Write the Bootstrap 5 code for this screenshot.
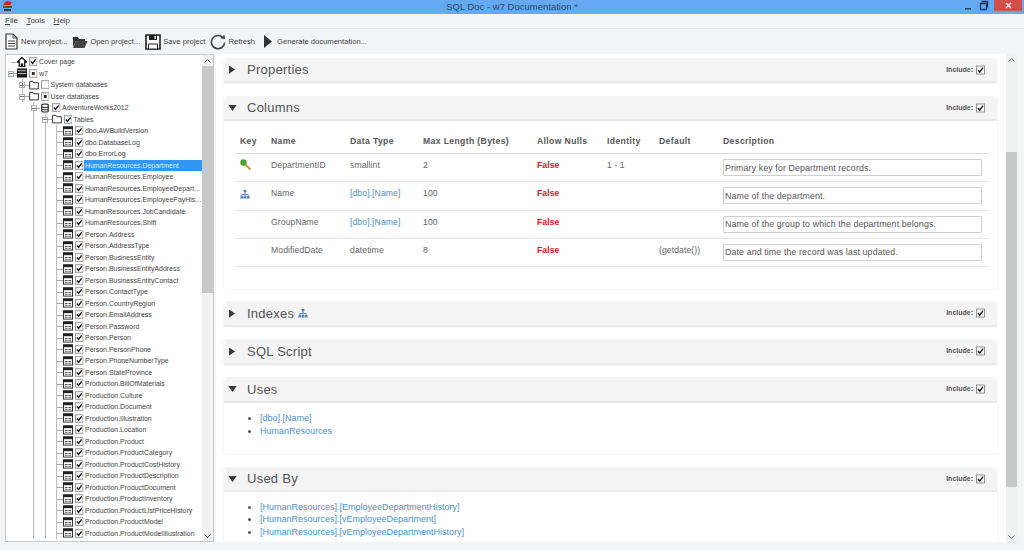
<!DOCTYPE html>
<html lang="en">
<head>
<meta charset="utf-8">
<title>SQL Doc - w7 Documentation *</title>
<link rel="stylesheet" href="https://cdn.jsdelivr.net/npm/bootstrap@5.3.0/dist/css/bootstrap.min.css">
<style>
html,body{height:100%;overflow:hidden}
body{background:#f3f4f6;font-family:"Liberation Sans",Arial,sans-serif;color:#555;width:1024px;height:550px}
.app-shell{height:550px}
.title-bar{height:14px;background:#64a9f1;color:#33465c;font-size:9.5px;line-height:14px;padding-left:2px}
.title-text{left:0;right:0;top:0}
.win-ctrl{width:12px;height:11px;color:#1d3a5c}
.win-close{width:28px;height:11px;background:#d0514b;margin:0 2px 0 4px}
.menu-bar{height:14px;font-size:8px;color:#444;padding-left:5px;gap:8.5px;border-bottom:1px solid #e2e4e7;box-sizing:content-box}
.menu-bar u{text-decoration-thickness:1px}
.tool-bar{height:25px;font-size:7.6px;color:#444;padding-left:5px}
.tool-item{gap:2px;margin-right:5px}
.tool-item:last-child{margin-left:4px;gap:5px}
.main-area{height:488px;gap:2px;padding-left:5px}
.tree-panel{width:209px;background:#fff;border:1px solid #c9cbce;overflow:hidden}
.tree-view{flex:1;overflow:hidden;font-size:6.95px;color:#444;line-height:11.5px;padding:1px 0 0 4px}
.tree-view ul{list-style:none;margin:0;padding:0;border-left:1px solid transparent}
.tree-view ul ul{margin-left:10.5px;border-left:1px solid #b9bbbd}
.tree-view ul.lvl-one{border-left-color:transparent}
.nd{height:11.5px;display:flex;align-items:center;white-space:nowrap;padding-left:6px;position:relative}
.nd-line{box-shadow:-1px 0 0 #b9bbbd}
.nd::before{content:"";position:absolute;left:0;top:5.5px;width:6px;border-top:1px solid #a5a7aa}
.nd svg{flex:none}
.ic{width:10px;height:10px;margin-right:2px;color:#1b1b1b}
.ck{width:8.5px;height:9px;margin-right:1.5px}
.xp{position:absolute;left:-3.5px;top:3px;width:6px;height:6px;border:1px solid #a9abad;z-index:1;background:linear-gradient(#777,#777) center/4px 1px no-repeat #fff}
.xp-plus{background:linear-gradient(#777,#777) center/4px 1px no-repeat,linear-gradient(#777,#777) center/1px 4px no-repeat,#fff}
.nd-sel span{background:#3297f3;color:#dcecff;width:118px;padding-left:1px;margin-left:-1px}
.sb-track{width:11px;background:#f1f1f1;flex:none;color:#666;font-size:0}
.sb-arrow{height:11px}
.sb-thumb{background:#c8c8c8}
.tree-thumb{height:227px}
.doc-panel{flex:1;background:#fff;overflow:hidden;margin-right:7px}
.doc-scroll{flex:1;overflow:hidden;padding:4.5px 9px 0 8px}
.doc-thumb{height:335px;margin-top:87px}
.doc-card{border:0;border-radius:3px;margin-bottom:13.5px;background:#fff;box-shadow:0 0 0 1px #f6f6f6}
.doc-head{height:24.5px;background:#f4f4f4;border:0;border-bottom:2px solid #e9e9e9;padding:0 12px 0 6px;font-size:13px;color:#555;letter-spacing:.25px;border-radius:3px 3px 0 0}
.tri-r{width:6px;height:9px;color:#3a3a3a;margin-left:-1px;margin-right:12px;flex:none}
.tri-d{width:9px;height:6px;color:#3a3a3a;margin-left:-2px;margin-right:10px;flex:none}
.incl{font-size:7px;font-weight:700;letter-spacing:0;color:#555;gap:3px}
.incl svg{width:9px;height:10px}
.doc-body{padding:9px 9px 21.5px 11px}
.col-table{table-layout:fixed;width:754px;margin:0;font-size:8.6px;color:#666;--bs-table-color:#666}
.col-table th,.col-table td{padding:0 5px;vertical-align:top;border-color:#e4e4e4;letter-spacing:.1px}
.col-table th{font-size:8.6px;height:23.5px;padding-top:5px;color:#555;letter-spacing:.38px;border-bottom-color:#ddd}
.col-table td{height:28.3px;padding-top:5px}
.col-table th:nth-child(1){width:31px}
.col-table th:nth-child(2){width:79px}
.col-table th:nth-child(3){width:73px}
.col-table th:nth-child(4){width:114px}
.col-table th:nth-child(5){width:70px}
.col-table th:nth-child(6){width:52px}
.col-table th:nth-child(7){width:64px}
.col-table td:nth-child(1){padding-top:4.5px}
.col-table td:nth-child(8){padding:5px 7px 0 5px}
.col-table tr:last-child td{border-bottom-color:#e4e4e4}
.col-table a,.ref-list a{color:#4a8fce;text-decoration:none}
.no-null{color:#e0101c;font-weight:700}
.desc-input{height:17px;min-height:0;padding:0 1px;font-size:8.85px;line-height:15px;color:#555;border:1px solid #cfcfcf;border-radius:1px;letter-spacing:.1px}
.ref-list{font-size:9px;line-height:12.5px;margin:0;padding-left:36px;color:#555}
.uses-body{padding:9.5px 0 17px}
.used-body{padding:8.5px 0 14px}
.key-ic{width:12px;height:12px}
.idx-ic{width:10px;height:10px}
.ic-tool{display:block}
.ic-doc{margin-right:1px}
</style>
</head>
<body>
<svg width="0" height="0" class="position-absolute">
<defs>
<symbol id="tbl" viewBox="0 0 11 10"><rect x=".5" y=".5" width="10" height="9" fill="#fff" stroke="#222"/><rect x="0" y="0" width="11" height="3" fill="#222"/><path d="M2 5h3v1H2zM6 5h3v1H6zM2 7h3v1H2zM6 7h3v1H6z" fill="#555"/></symbol>
<symbol id="chk" viewBox="0 0 9 9"><rect x=".5" y=".5" width="8" height="8" fill="#fff" stroke="#8f9296"/><path d="M2 4.500 3.800 6.600 7 2.200" fill="none" stroke="#111" stroke-width="1.400"/></symbol>
<symbol id="mix" viewBox="0 0 9 9"><rect x=".5" y=".5" width="8" height="8" fill="#fff" stroke="#8f9296"/><rect x="3" y="3" width="3" height="3" fill="#222"/></symbol>
<symbol id="emp" viewBox="0 0 9 9"><rect x=".5" y=".5" width="8" height="8" fill="#fff" stroke="#8f9296"/></symbol>
<symbol id="fld" viewBox="0 0 11 10"><path d="M.7 2.700V1h3.600l1 1.500h5v6.800H.7z" fill="#fff" stroke="#222" stroke-width="1"/></symbol>
<symbol id="home" viewBox="0 0 11 11"><path d="M5.500 .5 .5 5.500h2v5h6v-5h2z" fill="#fff" stroke="#111" stroke-width="1.400"/><rect x="4.300" y="7" width="2.400" height="3.500" fill="#111"/></symbol>
<symbol id="srv" viewBox="0 0 11 10"><rect width="11" height="10" fill="#1a1a1a"/><path d="M1 2.500h9M1 5.500h9" stroke="#ddd" stroke-width="1"/></symbol>
<symbol id="db" viewBox="0 0 11 10"><path d="M2 1.500C2 .3 9 .3 9 1.500v7c0 1.200-7 1.200-7 0z" fill="#fff" stroke="#111" stroke-width="1.200"/><path d="M2 3.800c0 1 7 1 7 0M2 6.200c0 1 7 1 7 0" fill="none" stroke="#111"/></symbol>
<symbol id="rt" viewBox="0 0 8 11"><path d="M0 0 8 5.500 0 11z" fill="currentColor"/></symbol>
<symbol id="dn" viewBox="0 0 11 8"><path d="M0 0h11L5.500 8z" fill="currentColor"/></symbol>
<symbol id="idx" viewBox="0 0 11 10"><path d="M5.500 2v3M2 8V5.500h7V8M5.500 5v3" fill="none" stroke="#4a7fc6"/><path d="M4 .5h3v2.500H4zM.5 7.500h3V10h-3zM4 7.500h3V10H4zM7.500 7.500h3V10h-3z" fill="#4a7fc6"/></symbol>
</defs>
</svg>

<div class="app-shell d-flex flex-column">
  <header class="title-bar d-flex align-items-start position-relative flex-none">
    <svg width="11" height="12" viewBox="0 0 11 12"><path d="M1 5 4 1l6 1-2 3z" fill="#c9242b"/><path d="M1 6h9v2H1z" fill="#6e4a3a"/><path d="M2 9h7v2H2z" fill="#333"/></svg>
    <div class="title-text position-absolute text-center">SQL Doc - w7 Documentation *</div>
    <div class="ms-auto d-flex align-items-start">
      <svg class="win-ctrl" viewBox="0 0 12 11"><path d="M3 8h6v1.500H3z" fill="currentColor"/></svg>
      <svg class="win-ctrl ms-1" viewBox="0 0 12 11"><path d="M3.500 1.500h6v6M2.500 3.500h6v6h-6z" fill="none" stroke="currentColor" stroke-width="1.300"/></svg>
      <div class="win-close d-flex align-items-center justify-content-center"><svg width="7" height="7" viewBox="0 0 7 7"><path d="M1 1l5 5M6 1 1 6" stroke="#fbe3e1" stroke-width="1.500"/></svg></div>
    </div>
  </header>

  <nav class="menu-bar d-flex align-items-center">
    <span><u>F</u>ile</span><span><u>T</u>ools</span><span><u>H</u>elp</span>
  </nav>

  <div class="tool-bar d-flex align-items-center">
    <div class="tool-item d-flex align-items-center">
      <svg class="ic-tool ic-doc" width="13" height="17" viewBox="0 0 13 17"><path d="M1 1h7l4 4v11H1z" fill="#fff" stroke="#333" stroke-width="1.200"/><path d="M8 1v4h4M3 8h7M3 10.500h7M3 13h7" fill="none" stroke="#444"/></svg><span>New project...</span>
    </div>
    <div class="tool-item d-flex align-items-center">
      <svg class="ic-tool" width="16" height="14" viewBox="0 0 16 14"><path d="M1 2h5l1 2h6v2H4L1 12z" fill="#333"/><path d="M4 6h11.500l-3 7H1z" fill="#444"/></svg><span>Open project...</span>
    </div>
    <div class="tool-item d-flex align-items-center">
      <svg class="ic-tool" width="16" height="16" viewBox="0 0 16 16"><path d="M1 1h14v14H1z" fill="#fff" stroke="#222" stroke-width="1.600"/><path d="M4 1h8v5H4z" fill="#222"/><path d="M9.500 2h1.500v3H9.500z" fill="#fff"/><path d="M3.500 10h9v5h-9z" fill="#fff" stroke="#222"/></svg><span>Save project</span>
    </div>
    <div class="tool-item d-flex align-items-center">
      <svg class="ic-tool" width="16" height="16" viewBox="0 0 17 17"><path d="M13.600 3.800A7 7 0 1 0 15.500 9" fill="none" stroke="#444" stroke-width="1.700"/><path d="M11 4.500 16 5.500 15.500 .8z" fill="#444"/></svg><span>Refresh</span>
    </div>
    <div class="tool-item d-flex align-items-center">
      <svg class="ic-tool" width="8" height="13" viewBox="0 0 8 13"><path d="M0 0 8 6.500 0 13z" fill="#333"/></svg><span>Generate documentation...</span>
    </div>
  </div>

  <main class="main-area d-flex">
    <section class="tree-panel d-flex">
      <div class="tree-view">
        <ul>
          <li class="nd"><svg class="ic"><use href="#home"/></svg><svg class="ck"><use href="#chk"/></svg><span>Cover page</span></li>
          <li class="nd"><i class="xp"></i><svg class="ic"><use href="#srv"/></svg><svg class="ck"><use href="#mix"/></svg><span>w7</span></li>
          <li>
            <ul class="lvl-one">
              <li class="nd nd-line"><i class="xp xp-plus"></i><svg class="ic"><use href="#fld"/></svg><svg class="ck"><use href="#emp"/></svg><span>System databases</span></li>
              <li class="nd nd-line"><i class="xp"></i><svg class="ic"><use href="#fld"/></svg><svg class="ck"><use href="#mix"/></svg><span>User databases</span></li>
              <li>
                <ul>
                  <li class="nd"><i class="xp"></i><svg class="ic"><use href="#db"/></svg><svg class="ck"><use href="#chk"/></svg><span>AdventureWorks2012</span></li>
                  <li>
                    <ul>
                      <li class="nd"><i class="xp"></i><svg class="ic"><use href="#fld"/></svg><svg class="ck"><use href="#chk"/></svg><span>Tables</span></li>
                      <li>
                        <ul>
                          <li class="nd"><svg class="ic"><use href="#tbl"/></svg><svg class="ck"><use href="#chk"/></svg><span>dbo.AWBuildVersion</span></li>
                          <li class="nd"><svg class="ic"><use href="#tbl"/></svg><svg class="ck"><use href="#chk"/></svg><span>dbo.DatabaseLog</span></li>
                          <li class="nd"><svg class="ic"><use href="#tbl"/></svg><svg class="ck"><use href="#chk"/></svg><span>dbo.ErrorLog</span></li>
                          <li class="nd nd-sel"><svg class="ic"><use href="#tbl"/></svg><svg class="ck"><use href="#chk"/></svg><span>HumanResources.Department</span></li>
                          <li class="nd"><svg class="ic"><use href="#tbl"/></svg><svg class="ck"><use href="#chk"/></svg><span>HumanResources.Employee</span></li>
                          <li class="nd"><svg class="ic"><use href="#tbl"/></svg><svg class="ck"><use href="#chk"/></svg><span>HumanResources.EmployeeDepart...</span></li>
                          <li class="nd"><svg class="ic"><use href="#tbl"/></svg><svg class="ck"><use href="#chk"/></svg><span>HumanResources.EmployeePayHis...</span></li>
                          <li class="nd"><svg class="ic"><use href="#tbl"/></svg><svg class="ck"><use href="#chk"/></svg><span>HumanResources.JobCandidate</span></li>
                          <li class="nd"><svg class="ic"><use href="#tbl"/></svg><svg class="ck"><use href="#chk"/></svg><span>HumanResources.Shift</span></li>
                          <li class="nd"><svg class="ic"><use href="#tbl"/></svg><svg class="ck"><use href="#chk"/></svg><span>Person.Address</span></li>
                          <li class="nd"><svg class="ic"><use href="#tbl"/></svg><svg class="ck"><use href="#chk"/></svg><span>Person.AddressType</span></li>
                          <li class="nd"><svg class="ic"><use href="#tbl"/></svg><svg class="ck"><use href="#chk"/></svg><span>Person.BusinessEntity</span></li>
                          <li class="nd"><svg class="ic"><use href="#tbl"/></svg><svg class="ck"><use href="#chk"/></svg><span>Person.BusinessEntityAddress</span></li>
                          <li class="nd"><svg class="ic"><use href="#tbl"/></svg><svg class="ck"><use href="#chk"/></svg><span>Person.BusinessEntityContact</span></li>
                          <li class="nd"><svg class="ic"><use href="#tbl"/></svg><svg class="ck"><use href="#chk"/></svg><span>Person.ContactType</span></li>
                          <li class="nd"><svg class="ic"><use href="#tbl"/></svg><svg class="ck"><use href="#chk"/></svg><span>Person.CountryRegion</span></li>
                          <li class="nd"><svg class="ic"><use href="#tbl"/></svg><svg class="ck"><use href="#chk"/></svg><span>Person.EmailAddress</span></li>
                          <li class="nd"><svg class="ic"><use href="#tbl"/></svg><svg class="ck"><use href="#chk"/></svg><span>Person.Password</span></li>
                          <li class="nd"><svg class="ic"><use href="#tbl"/></svg><svg class="ck"><use href="#chk"/></svg><span>Person.Person</span></li>
                          <li class="nd"><svg class="ic"><use href="#tbl"/></svg><svg class="ck"><use href="#chk"/></svg><span>Person.PersonPhone</span></li>
                          <li class="nd"><svg class="ic"><use href="#tbl"/></svg><svg class="ck"><use href="#chk"/></svg><span>Person.PhoneNumberType</span></li>
                          <li class="nd"><svg class="ic"><use href="#tbl"/></svg><svg class="ck"><use href="#chk"/></svg><span>Person.StateProvince</span></li>
                          <li class="nd"><svg class="ic"><use href="#tbl"/></svg><svg class="ck"><use href="#chk"/></svg><span>Production.BillOfMaterials</span></li>
                          <li class="nd"><svg class="ic"><use href="#tbl"/></svg><svg class="ck"><use href="#chk"/></svg><span>Production.Culture</span></li>
                          <li class="nd"><svg class="ic"><use href="#tbl"/></svg><svg class="ck"><use href="#chk"/></svg><span>Production.Document</span></li>
                          <li class="nd"><svg class="ic"><use href="#tbl"/></svg><svg class="ck"><use href="#chk"/></svg><span>Production.Illustration</span></li>
                          <li class="nd"><svg class="ic"><use href="#tbl"/></svg><svg class="ck"><use href="#chk"/></svg><span>Production.Location</span></li>
                          <li class="nd"><svg class="ic"><use href="#tbl"/></svg><svg class="ck"><use href="#chk"/></svg><span>Production.Product</span></li>
                          <li class="nd"><svg class="ic"><use href="#tbl"/></svg><svg class="ck"><use href="#chk"/></svg><span>Production.ProductCategory</span></li>
                          <li class="nd"><svg class="ic"><use href="#tbl"/></svg><svg class="ck"><use href="#chk"/></svg><span>Production.ProductCostHistory</span></li>
                          <li class="nd"><svg class="ic"><use href="#tbl"/></svg><svg class="ck"><use href="#chk"/></svg><span>Production.ProductDescription</span></li>
                          <li class="nd"><svg class="ic"><use href="#tbl"/></svg><svg class="ck"><use href="#chk"/></svg><span>Production.ProductDocument</span></li>
                          <li class="nd"><svg class="ic"><use href="#tbl"/></svg><svg class="ck"><use href="#chk"/></svg><span>Production.ProductInventory</span></li>
                          <li class="nd"><svg class="ic"><use href="#tbl"/></svg><svg class="ck"><use href="#chk"/></svg><span>Production.ProductListPriceHistory</span></li>
                          <li class="nd"><svg class="ic"><use href="#tbl"/></svg><svg class="ck"><use href="#chk"/></svg><span>Production.ProductModel</span></li>
                          <li class="nd"><svg class="ic"><use href="#tbl"/></svg><svg class="ck"><use href="#chk"/></svg><span>Production.ProductModelIllustration</span></li>
                        </ul>
                      </li>
                    </ul>
                  </li>
                </ul>
              </li>
            </ul>
          </li>
        </ul>
      </div>
      <div class="sb-track d-flex flex-column">
        <div class="sb-arrow d-flex align-items-center justify-content-center"><svg width="7" height="4" viewBox="0 0 7 4"><path d="M.5 3.500 3.500 .5l3 3" fill="none" stroke="#666"/></svg></div>
        <div class="sb-thumb tree-thumb"></div>
        <div class="sb-arrow d-flex align-items-center justify-content-center mt-auto"><svg width="7" height="4" viewBox="0 0 7 4"><path d="M.5 .5 3.500 3.500l3-3" fill="none" stroke="#666"/></svg></div>
      </div>
    </section>

    <section class="doc-panel d-flex">
      <div class="doc-scroll">
        <div class="card doc-card">
          <div class="card-header doc-head d-flex align-items-center">
            <svg class="tri-r"><use href="#rt"/></svg><span>Properties</span>
            <span class="incl ms-auto d-flex align-items-center">Include: <svg><use href="#chk"/></svg></span>
          </div>
        </div>
        <div class="card doc-card">
          <div class="card-header doc-head d-flex align-items-center">
            <svg class="tri-d"><use href="#dn"/></svg><span>Columns</span>
            <span class="incl ms-auto d-flex align-items-center">Include: <svg><use href="#chk"/></svg></span>
          </div>
          <div class="card-body doc-body">
            <table class="table col-table">
              <thead>
                <tr><th>Key</th><th>Name</th><th>Data Type</th><th>Max Length (Bytes)</th><th>Allow Nulls</th><th>Identity</th><th>Default</th><th>Description</th></tr>
              </thead>
              <tbody>
                <tr>
                  <td><svg class="key-ic" viewBox="0 0 12 12"><circle cx="3.500" cy="3.500" r="3.200" fill="#4fa02e"/><path d="M5.500 5.500 10.500 10.500" stroke="#c9a13a" stroke-width="2.200"/></svg></td>
                  <td>DepartmentID</td><td>smallint</td><td>2</td><td class="no-null">False</td><td>1 - 1</td><td></td>
                  <td><input class="form-control desc-input" type="text" value="Primary key for Department records."></td>
                </tr>
                <tr>
                  <td><svg class="idx-ic"><use href="#idx"/></svg></td>
                  <td>Name</td><td><a href="#">[dbo].[Name]</a></td><td>100</td><td class="no-null">False</td><td></td><td></td>
                  <td><input class="form-control desc-input" type="text" value="Name of the department."></td>
                </tr>
                <tr>
                  <td></td>
                  <td>GroupName</td><td><a href="#">[dbo].[Name]</a></td><td>100</td><td class="no-null">False</td><td></td><td></td>
                  <td><input class="form-control desc-input" type="text" value="Name of the group to which the department belongs."></td>
                </tr>
                <tr>
                  <td></td>
                  <td>ModifiedDate</td><td>datetime</td><td>8</td><td class="no-null">False</td><td></td><td>(getdate())</td>
                  <td><input class="form-control desc-input" type="text" value="Date and time the record was last updated."></td>
                </tr>
              </tbody>
            </table>
          </div>
        </div>
        <div class="card doc-card">
          <div class="card-header doc-head d-flex align-items-center">
            <svg class="tri-r"><use href="#rt"/></svg><span>Indexes</span><svg class="idx-ic ms-1"><use href="#idx"/></svg>
            <span class="incl ms-auto d-flex align-items-center">Include: <svg><use href="#chk"/></svg></span>
          </div>
        </div>
        <div class="card doc-card">
          <div class="card-header doc-head d-flex align-items-center">
            <svg class="tri-r"><use href="#rt"/></svg><span>SQL Script</span>
            <span class="incl ms-auto d-flex align-items-center">Include: <svg><use href="#chk"/></svg></span>
          </div>
        </div>
        <div class="card doc-card">
          <div class="card-header doc-head d-flex align-items-center">
            <svg class="tri-d"><use href="#dn"/></svg><span>Uses</span>
            <span class="incl ms-auto d-flex align-items-center">Include: <svg><use href="#chk"/></svg></span>
          </div>
          <div class="card-body uses-body">
            <ul class="ref-list">
              <li><a href="#">[dbo].[Name]</a></li>
              <li><a href="#">HumanResources</a></li>
            </ul>
          </div>
        </div>
        <div class="card doc-card">
          <div class="card-header doc-head d-flex align-items-center">
            <svg class="tri-d"><use href="#dn"/></svg><span>Used By</span>
            <span class="incl ms-auto d-flex align-items-center">Include: <svg><use href="#chk"/></svg></span>
          </div>
          <div class="card-body used-body">
            <ul class="ref-list">
              <li><a href="#">[HumanResources].[EmployeeDepartmentHistory]</a></li>
              <li><a href="#">[HumanResources].[vEmployeeDepartment]</a></li>
              <li><a href="#">[HumanResources].[vEmployeeDepartmentHistory]</a></li>
            </ul>
          </div>
        </div>
      </div>
      <div class="sb-track d-flex flex-column">
        <div class="sb-arrow d-flex align-items-center justify-content-center"><svg width="7" height="4" viewBox="0 0 7 4"><path d="M.5 3.500 3.500 .5l3 3" fill="none" stroke="#666"/></svg></div>
        <div class="sb-thumb doc-thumb"></div>
        <div class="sb-arrow d-flex align-items-center justify-content-center mt-auto"><svg width="7" height="4" viewBox="0 0 7 4"><path d="M.5 .5 3.500 3.500l3-3" fill="none" stroke="#666"/></svg></div>
      </div>
    </section>
  </main>
</div>
<script src="https://cdn.jsdelivr.net/npm/bootstrap@5.3.0/dist/js/bootstrap.bundle.min.js"></script>
</body>
</html>
